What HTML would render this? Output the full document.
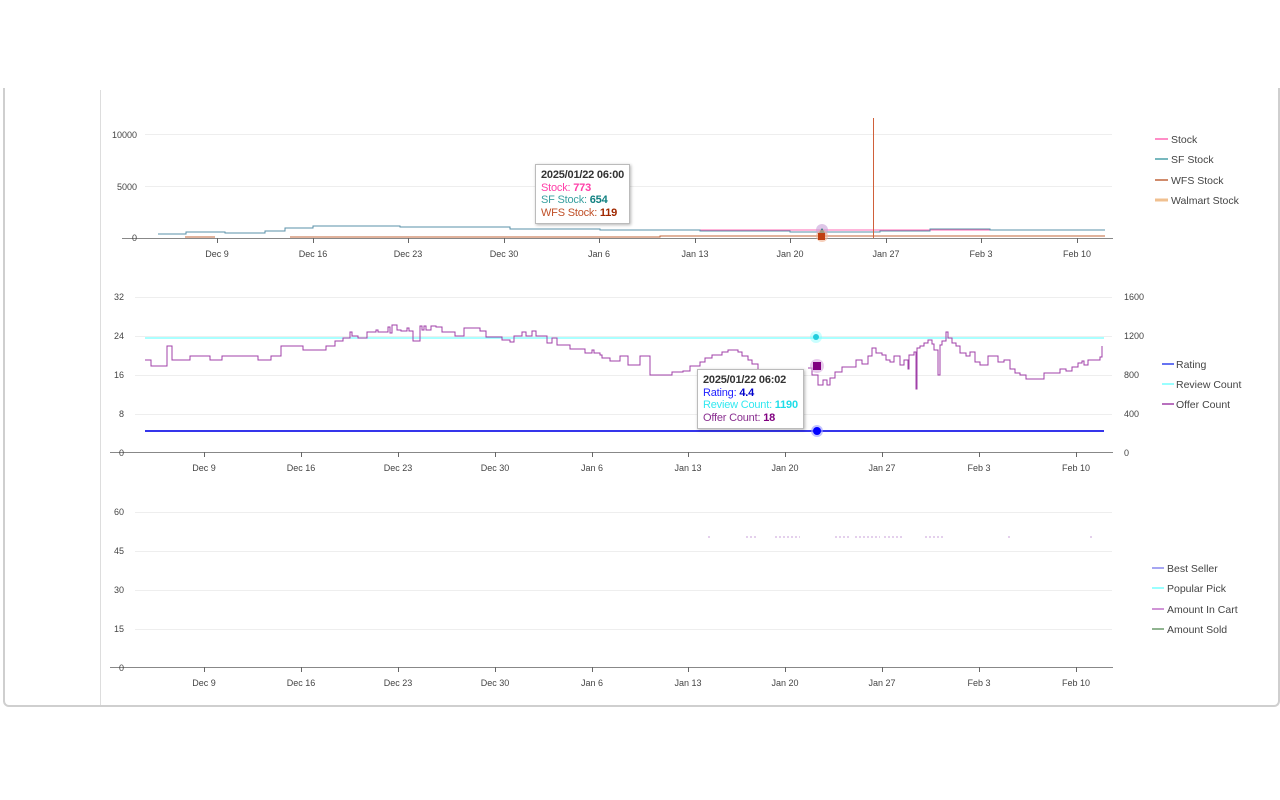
<!DOCTYPE html>
<html><head><meta charset="utf-8"><style>
html,body{margin:0;padding:0;background:#fff;width:1280px;height:800px;overflow:hidden;font-family:"Liberation Sans",sans-serif}
.card{position:absolute;left:3px;top:88px;width:1273px;height:617px;border:2px solid #cfcfcf;border-top:none;border-radius:0 0 6px 6px}
.vl{position:absolute;left:100px;top:90px;width:1px;height:615px;background:#ddd}
.tt{position:absolute;background:#fff;border:1px solid #bbb;box-shadow:1px 1px 3px rgba(0,0,0,.3);font-size:11px;line-height:12.5px;padding:4px 5px;white-space:nowrap;letter-spacing:-0.2px}
.tt b{font-weight:bold}
</style></head><body>
<div class="card"></div><div class="vl"></div>
<svg width="1280" height="800" style="position:absolute;left:0;top:0" font-family="Liberation Sans, sans-serif">
<g stroke="#eee" stroke-width="1">
<line x1="145" y1="134.5" x2="1112" y2="134.5"/><line x1="145" y1="186.5" x2="1112" y2="186.5"/>
<line x1="135" y1="297.5" x2="1112" y2="297.5"/><line x1="135" y1="336.5" x2="1112" y2="336.5"/><line x1="135" y1="375.5" x2="1112" y2="375.5"/><line x1="135" y1="414.5" x2="1112" y2="414.5"/>
<line x1="135" y1="512.5" x2="1112" y2="512.5"/><line x1="135" y1="551.5" x2="1112" y2="551.5"/><line x1="135" y1="590.5" x2="1112" y2="590.5"/><line x1="135" y1="629.5" x2="1112" y2="629.5"/>
</g>
<g stroke="#888" stroke-width="1">
<line x1="122" y1="238.5" x2="1113" y2="238.5"/>
<line x1="110" y1="452.5" x2="1113" y2="452.5"/>
<line x1="110" y1="667.5" x2="1113" y2="667.5"/>
</g>
<g stroke="#666">
<path d="M217.5 238v5M313.5 238v5M408.5 238v5M504.5 238v5M599.5 238v5M695.5 238v5M790.5 238v5M886.5 238v5M981.5 238v5M1077.5 238v5"/>
<path d="M204.5 452v5M301.5 452v5M398.5 452v5M495.5 452v5M592.5 452v5M688.5 452v5M785.5 452v5M882.5 452v5M979.5 452v5M1076.5 452v5"/>
<path d="M204.5 667v5M301.5 667v5M398.5 667v5M495.5 667v5M592.5 667v5M688.5 667v5M785.5 667v5M882.5 667v5M979.5 667v5M1076.5 667v5"/>
</g>
<g font-size="9" fill="#444" text-anchor="middle">
<text x="217" y="257">Dec 9</text><text x="313" y="257">Dec 16</text><text x="408" y="257">Dec 23</text><text x="504" y="257">Dec 30</text><text x="599" y="257">Jan 6</text><text x="695" y="257">Jan 13</text><text x="790" y="257">Jan 20</text><text x="886" y="257">Jan 27</text><text x="981" y="257">Feb 3</text><text x="1077" y="257">Feb 10</text>
<text x="204" y="471">Dec 9</text><text x="301" y="471">Dec 16</text><text x="398" y="471">Dec 23</text><text x="495" y="471">Dec 30</text><text x="592" y="471">Jan 6</text><text x="688" y="471">Jan 13</text><text x="785" y="471">Jan 20</text><text x="882" y="471">Jan 27</text><text x="979" y="471">Feb 3</text><text x="1076" y="471">Feb 10</text>
<text x="204" y="686">Dec 9</text><text x="301" y="686">Dec 16</text><text x="398" y="686">Dec 23</text><text x="495" y="686">Dec 30</text><text x="592" y="686">Jan 6</text><text x="688" y="686">Jan 13</text><text x="785" y="686">Jan 20</text><text x="882" y="686">Jan 27</text><text x="979" y="686">Feb 3</text><text x="1076" y="686">Feb 10</text>
</g>
<g font-size="9" fill="#444" text-anchor="end">
<text x="137" y="138">10000</text><text x="137" y="190">5000</text><text x="137" y="241">0</text>
<text x="124" y="300">32</text><text x="124" y="339">24</text><text x="124" y="378">16</text><text x="124" y="417">8</text><text x="124" y="456">0</text>
<text x="124" y="515">60</text><text x="124" y="554">45</text><text x="124" y="593">30</text><text x="124" y="632">15</text><text x="124" y="671">0</text>
</g>
<g font-size="9" fill="#444">
<text x="1124" y="300">1600</text><text x="1124" y="339">1200</text><text x="1124" y="378">800</text><text x="1124" y="417">400</text><text x="1124" y="456">0</text>
</g>
<path d="M660 230H1105" stroke="#ff69b4" stroke-width="1" fill="none"/>
<path d="M158 234H186V232H225V233H265V231H285V228H313V226H400V227H510V229H600V230H700V231H790V232H880V231H930V229H990V230H1105" stroke="#5a90a8" stroke-width="1" fill="none"/>
<path d="M185 237H215M290 237H660V236H1105" stroke="#c0643a" stroke-width="1" fill="none"/>
<path d="M873.5 118V238" stroke="#d0603a" stroke-width="1"/>
<circle cx="822" cy="230" r="6" fill="#c8a0d8" opacity=".6"/><path d="M819 233l3-5 3 5z" fill="#2a7a70"/>
<circle cx="822" cy="236" r="6" fill="#f0b090" opacity=".6"/><rect x="818" y="233" width="7" height="7" fill="#c04010"/>
<path d="M145 338H1104" stroke="#7ff" stroke-width="1.3"/>
<path d="M145 431H1104" stroke="#1818e8" stroke-width="1.8"/>
<path d="M145 360H151V366H167V346H172V360H190V356H210V360H222V356H258V360H271V356H281V346H303V350H326V346H335V341H343V338H350V332H352V336H358V338H367V332H376V330H378V332H386V332H388V327H390V333H392V325H397V330H401V331H407V328H409V331H413V341H420V326H422V330H424V326H426V330H431V326H436V327H442V332H455V336H464V328H480V331H486V337H502V340H510V342H514V336H522V332H526V336H532V331H536V336H547V343H552V338H557V345H570V349H585V353H592V350H594V353H600V355H602V358H610V361H620V356H628V365H640V356H650V375H672V372H683V371H690V366H700V362H705V358H712V355H722V352H728V350H738V352H742V356H748V360H752V364H758V378M808 368H812V375H818V385H823V380H827V385H830V378H835V372H842V367H856V360H862V364H868V356H872V348H876V353H882V355H886V360H890V362H894V356H900V365H904V360H908V369H909V355H914V352H916V389H917V348H920V346H924V343H928V340H932V344H934V350H938V375H940V345H942V341H946V332H948V338H952V343H956V346H960V353H966V356H970V352H975V362H980V365H988V356H998V362H1004V360H1010V369H1015V373H1020V375H1026V379H1044V373H1060V369H1066V371H1072V367H1078V363H1082V361H1084V365H1088V360H1100V357H1102V346" stroke="#a040a8" stroke-width="1" fill="none"/>
<circle cx="816" cy="337" r="6" fill="#7ff" opacity=".4"/><circle cx="816" cy="337" r="3" fill="#2cd"/>
<circle cx="817" cy="366" r="7" fill="#d8a8e0" opacity=".6"/><rect x="813" y="362" width="8" height="8" fill="#800080"/>
<circle cx="817" cy="431" r="6" fill="#99f" opacity=".6"/><circle cx="817" cy="431" r="4" fill="#00f"/>
<path d="M708 537h4M746 537h10M775 537h25M835 537h15M855 537h25M884 537h20M925 537h18M1008 537h4M1090 537h4" stroke="#c9a0d8" stroke-width="1" stroke-dasharray="2 2"/>
<g stroke-width="1.5">
<line x1="1155" y1="139" x2="1168" y2="139" stroke="#ff69b4"/><line x1="1155" y1="159" x2="1168" y2="159" stroke="#4aa0a8"/><line x1="1155" y1="180" x2="1168" y2="180" stroke="#c0643a"/><line x1="1155" y1="200" x2="1168" y2="200" stroke="#f0c090" stroke-width="3"/>
<line x1="1162" y1="364" x2="1174" y2="364" stroke="#3344ee"/><line x1="1162" y1="384" x2="1174" y2="384" stroke="#7ff"/><line x1="1162" y1="404" x2="1174" y2="404" stroke="#a040a8"/>
<line x1="1152" y1="568" x2="1164" y2="568" stroke="#8888ee"/><line x1="1152" y1="588" x2="1164" y2="588" stroke="#7ff"/><line x1="1152" y1="609" x2="1164" y2="609" stroke="#c070c8"/><line x1="1152" y1="629" x2="1164" y2="629" stroke="#6a9a6a"/>
</g>
<g font-size="10.5" fill="#444">
<text x="1171" y="143">Stock</text><text x="1171" y="163">SF Stock</text><text x="1171" y="184">WFS Stock</text><text x="1171" y="204">Walmart Stock</text>
<text x="1176" y="368">Rating</text><text x="1176" y="388">Review Count</text><text x="1176" y="408">Offer Count</text>
<text x="1167" y="572">Best Seller</text><text x="1167" y="592">Popular Pick</text><text x="1167" y="613">Amount In Cart</text><text x="1167" y="633">Amount Sold</text>
</g>
</svg>
<div class="tt" style="left:535px;top:164px"><b style="color:#333">2025/01/22 06:00</b><br><span style="color:#ff3fa8">Stock: <b>773</b></span><br><span style="color:#3aa0a0">SF Stock: <b style="color:#108080">654</b></span><br><span style="color:#c05028">WFS Stock: <b style="color:#a02800">119</b></span></div>
<div class="tt" style="left:697px;top:369px"><b style="color:#333">2025/01/22 06:02</b><br><span style="color:#2222ff">Rating: <b style="color:#0000cc">4.4</b></span><br><span style="color:#33e8f0">Review Count: <b style="color:#20dde8">1190</b></span><br><span style="color:#8a3090">Offer Count: <b style="color:#800080">18</b></span></div>
</body></html>
